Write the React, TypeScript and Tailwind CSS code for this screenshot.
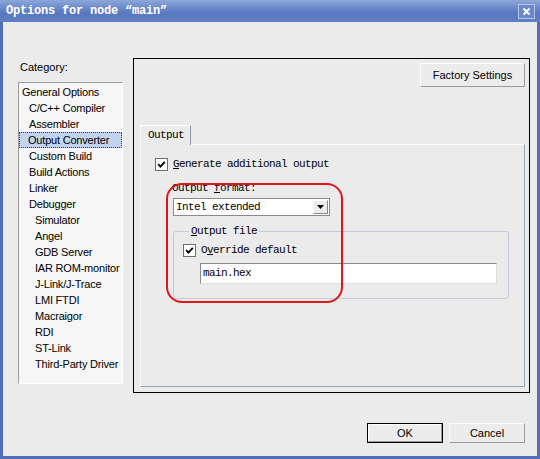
import React from "react";

const mono = "font-['Liberation_Mono',monospace] text-[11px] tracking-[-0.6px] leading-[13px] text-black whitespace-nowrap";
const sans = "font-['Liberation_Sans',Arial,sans-serif] text-[11px] leading-[13px] text-black whitespace-nowrap";

const categories: [string, number][] = [
  ["General Options", 0],
  ["C/C++ Compiler", 1],
  ["Assembler", 1],
  ["Output Converter", 1],
  ["Custom Build", 1],
  ["Build Actions", 1],
  ["Linker", 1],
  ["Debugger", 1],
  ["Simulator", 2],
  ["Angel", 2],
  ["GDB Server", 2],
  ["IAR ROM-monitor", 2],
  ["J-Link/J-Trace", 2],
  ["LMI FTDI", 2],
  ["Macraigor", 2],
  ["RDI", 2],
  ["ST-Link", 2],
  ["Third-Party Driver", 2],
];

const indent = ["pl-[2px]", "pl-[9px]", "pl-[15px]"];

function Check() {
  return (
    <span className="flex h-[13px] w-[13px] shrink-0 items-center justify-center border border-[#6f6f6f] bg-white">
      <svg width="9" height="9" viewBox="0 0 9 9">
        <path d="M1.2 4.2 L3.4 6.6 L7.8 1.8" stroke="#000" strokeWidth="1.9" fill="none" />
      </svg>
    </span>
  );
}

function Button({ label, width, isDefault }: { label: string; width: string; isDefault?: boolean }) {
  return (
    <div className={`${width} flex h-full ${isDefault ? "border border-black" : ""}`}>
      <div className="flex flex-1 items-center justify-center border-t border-l border-white border-r border-b border-r-[#9a9a9a] border-b-[#9a9a9a] bg-[#ececec]">
        <span className={sans}>{label}</span>
      </div>
    </div>
  );
}

export default function App() {
  return (
    <div className="flex h-[459px] w-[540px] flex-col overflow-hidden bg-[#4f70b7]">
      {/* title bar */}
      <div className="flex h-[22px] items-center justify-between bg-gradient-to-b from-[#8ca7da] via-[#5878bf] via-60% to-[#6080c4] pl-[6px] pr-[5px]">
        <span className="font-['Liberation_Mono',monospace] text-[12px] font-bold tracking-[-0.2px] text-white">
          Options for node “main”
        </span>
        <div className="flex h-[15px] w-[17px] items-center justify-center border border-[#b4c6e8] bg-[#6a89c9]">
          <svg width="9" height="9" viewBox="0 0 9 9">
            <path d="M1.5 1.5 L7.5 7.5 M7.5 1.5 L1.5 7.5" stroke="#fff" strokeWidth="2" />
          </svg>
        </div>
      </div>

      {/* client */}
      <div className="mx-[3px] mb-[3px] flex flex-1 flex-col bg-[#ebebeb]">
        <div className="flex pl-[15px] pt-[36px]">
          {/* category column */}
          <div className="mt-[3px] flex flex-col">
            <span className={`${sans} ml-[2px]`}>Category:</span>
            <div className="mt-[8px] flex h-[302px] w-[105px] flex-col overflow-hidden border-t border-l border-[#9c9c9c] border-r border-b border-r-white border-b-white bg-[#f6f6f6] pt-[1px]">
              {categories.map(([name, level], i) => (
                <div
                  key={name}
                  className={`flex h-[16px] shrink-0 items-center ${indent[level]} ${
                    i === 3 ? "border border-dotted border-[#333] bg-[#c2d4f0]" : "border border-transparent"
                  }`}
                >
                  <span className={`${sans} tracking-[-0.2px] ${i === 3 ? "-ml-px" : ""}`}>{name}</span>
                </div>
              ))}
            </div>
          </div>

          {/* options panel */}
          <div className="ml-[10px] flex h-[335px] w-[397px] flex-col border border-black">
            <div className="flex flex-1 flex-col pl-[6px] pr-[4px] pt-[4px] pb-[5px]">
              <div className="flex h-[24px] justify-end">
                <Button label="Factory Settings" width="w-[105px]" />
              </div>

              <div className="mt-[38px] flex">
                <div className="relative z-10 -mb-px flex h-[20px] w-[51px] items-center border-t border-l border-white border-r border-r-[#8e99ad] bg-[#ebebeb] pl-[7px]">
                  <span className={mono}>Output</span>
                </div>
              </div>

              <div className="relative flex flex-1 flex-col border-t border-l border-white border-r border-b border-r-[#97a2b6] border-b-[#97a2b6] pl-[14px] pt-[13px]">
                <div className="flex items-center gap-[5px]">
                  <Check />
                  <span className={mono}>
                    <span className="underline">G</span>enerate additional output
                  </span>
                </div>

                <span className={`${mono} ml-[17px] mt-[11px]`}>
                  Output <span className="underline">f</span>ormat:
                </span>

                <div className="ml-[18px] mt-[3px] flex h-[18px] w-[157px] border border-[#8a8a8a] bg-white">
                  <span className={`${mono} flex flex-1 items-center pl-[2px]`}>Intel extended</span>
                  <div className="m-px flex w-[15px] items-center justify-center border-t border-l border-white border-r border-b border-r-[#8a8a8a] border-b-[#8a8a8a] bg-[#ececec]">
                    <svg width="7" height="4" viewBox="0 0 7 4">
                      <path d="M0 0 H7 L3.5 4 Z" fill="#000" />
                    </svg>
                  </div>
                </div>

                <fieldset className="ml-[18px] mt-[9px] w-[336px] rounded-[3px] border border-[#c3cbd6] pb-[14px] pl-[9px]">
                  <legend className={`${mono} ml-[6px] px-[2px]`}>
                    <span className="underline">O</span>utput file
                  </legend>
                  <div className="mt-[6px] flex items-center gap-[5px]">
                    <Check />
                    <span className={mono}>
                      O<span className="underline">v</span>erride default
                    </span>
                  </div>
                  <div className="ml-[17px] mt-[6px] flex h-[21px] w-[297px] items-center border-t border-l border-[#8a8a8a] border-r border-b border-r-[#e0e0e0] border-b-[#e0e0e0] bg-white pl-[2px]">
                    <span className={mono}>main.hex</span>
                  </div>
                </fieldset>

                {/* red annotation */}
                <div className="pointer-events-none absolute left-[25px] top-[38px] h-[120px] w-[177px] rounded-[16px] border-2 border-[#e0141e]" />
              </div>
            </div>
          </div>
        </div>

        <div className="mt-[30px] flex h-[20px] justify-end gap-[6px] pr-[12px]">
          <Button label="OK" width="w-[76px]" isDefault />
          <Button label="Cancel" width="w-[76px]" />
        </div>
      </div>
    </div>
  );
}
